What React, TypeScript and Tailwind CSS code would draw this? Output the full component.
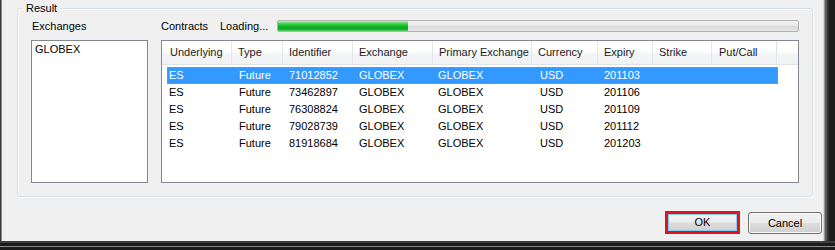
import React from "react";

type Col = { name: string; head: string; cell: string };

const cols: Col[] = [
  { name: "Underlying", head: "w-[70px] pl-[8px]", cell: "w-[65px] pl-[2px]" },
  { name: "Type", head: "w-[51px] pl-[6px]", cell: "w-[51px] pl-[7px]" },
  { name: "Identifier", head: "w-[70px] pl-[6px]", cell: "w-[70px] pl-[6px]" },
  { name: "Exchange", head: "w-[80px] pl-[6px]", cell: "w-[80px] pl-[6px]" },
  { name: "Primary Exchange", head: "w-[99px] pl-[6px]", cell: "w-[99px] pl-[5px]" },
  { name: "Currency", head: "w-[66px] pl-[6px]", cell: "w-[66px] pl-[8px]" },
  { name: "Expiry", head: "w-[55px] pl-[6px]", cell: "w-[55px] pl-[6px]" },
  { name: "Strike", head: "w-[59px] pl-[6px]", cell: "w-[59px] pl-[6px]" },
  { name: "Put/Call", head: "w-[65px] pl-[7px]", cell: "w-[65px] pl-[6px]" },
];

const rows = [
  ["ES", "Future", "71012852", "GLOBEX", "GLOBEX", "USD", "201103", "", ""],
  ["ES", "Future", "73462897", "GLOBEX", "GLOBEX", "USD", "201106", "", ""],
  ["ES", "Future", "76308824", "GLOBEX", "GLOBEX", "USD", "201109", "", ""],
  ["ES", "Future", "79028739", "GLOBEX", "GLOBEX", "USD", "201112", "", ""],
  ["ES", "Future", "81918684", "GLOBEX", "GLOBEX", "USD", "201203", "", ""],
];

export default function App() {
  return (
    <div className="w-[835px] h-[250px] flex flex-col bg-[#1b1b1b] font-['Liberation_Sans',Arial,sans-serif] text-[11px] leading-[13px] text-black overflow-hidden">
      <div className="flex h-[241px]">
        {/* left window edge */}
        <div className="w-[1px] bg-[#3a3a3a]" />
        <div className="w-[1px] bg-[#8a8a8a]" />
        {/* client area */}
        <div className="w-[821px] bg-[#f0f0f0] flex flex-col">
          {/* Group box */}
          <div className="relative ml-[15px] mt-[8px] w-[796px] h-[189px] border border-[#d5dfe5] rounded-[3px] shadow-[inset_1px_1px_0_#ffffff,1px_1px_0_#ffffff]">
            <span className="absolute left-[5px] -top-[7px] px-[3px] bg-[#f0f0f0]">Result</span>
            <div className="flex pl-[13px] pt-[8px] gap-[13px]">
              {/* Exchanges column */}
              <div className="flex flex-col w-[117px]">
                <div className="h-[18px] flex items-center pl-[1px]">Exchanges</div>
                <div className="mt-[5px] h-[143px] border border-[#828790] bg-white pl-[3px] pt-[2px]">
                  GLOBEX
                </div>
              </div>
              {/* Contracts column */}
              <div className="flex flex-col w-[638px]">
                <div className="h-[18px] flex items-center">
                  <span className="w-[59px]">Contracts</span>
                  <span className="w-[57px]">Loading...</span>
                  <div className="w-[522px] h-[12px] border border-[#b2b2b2] rounded-[2px] bg-[linear-gradient(to_bottom,#f4f4f4_0%,#e8e8e8_45%,#dadada_55%,#e6e6e6_100%)] overflow-hidden">
                    <div className="w-[130px] h-full bg-[linear-gradient(to_bottom,#b4f0b4_0%,#37d03f_30%,#06b025_60%,#0fa628_80%,#5ccf60_100%)]" />
                  </div>
                </div>
                <div className="mt-[5px] h-[143px] border border-[#828790] bg-white flex flex-col overflow-hidden">
                  {/* header */}
                  <div className="flex h-[24px] border-b border-[#e2e3e5] bg-[linear-gradient(to_bottom,#ffffff_0%,#ffffff_45%,#f4f5f7_55%,#f1f2f4_100%)]">
                    {cols.map((c) => (
                      <div
                        key={c.name}
                        className={`${c.head} h-full flex items-center border-r border-[#e4e5e7] whitespace-nowrap overflow-hidden text-[#1a1a1a]`}
                      >
                        {c.name}
                      </div>
                    ))}
                    <div className="flex-1 border-l border-[#f7f7f7]" />
                  </div>
                  {/* rows */}
                  <div className="mt-[2px] flex flex-col">
                    {rows.map((r, i) => (
                      <div
                        key={i}
                        className={
                          i === 0
                            ? "ml-[5px] w-[611px] h-[17px] flex items-center bg-[#3399ff] text-white outline outline-1 outline-dotted outline-[#e0862f] -outline-offset-1"
                            : "ml-[5px] w-[611px] h-[17px] flex items-center"
                        }
                      >
                        {r.map((v, j) => (
                          <div key={j} className={`${cols[j].cell} whitespace-nowrap overflow-hidden`}>
                            {v}
                          </div>
                        ))}
                      </div>
                    ))}
                  </div>
                </div>
              </div>
            </div>
          </div>
          {/* Buttons */}
          <div className="mt-[14px] flex justify-end gap-[8px] pr-[1px]">
            <button className="w-[75px] h-[23px] border-[3px] border-[#e4121c] p-0 bg-white">
              <div className="w-full h-full border border-[#7fd0f5] flex items-center justify-center bg-[linear-gradient(to_bottom,#f3f3f3_0%,#ececec_48%,#dddddd_52%,#d2d2d2_100%)]">
                OK
              </div>
            </button>
            <button className="w-[74px] h-[22px] mt-[1px] rounded-[3px] border border-[#707070] shadow-[inset_0_0_0_1px_#fbfbfb] flex items-center justify-center bg-[linear-gradient(to_bottom,#f2f2f2_0%,#ebebeb_48%,#dddddd_52%,#cfcfcf_100%)]">
              Cancel
            </button>
          </div>
        </div>
        {/* right window edge */}
        <div className="w-[1px] bg-[#d8d8d8]" />
        <div className="w-[1px] bg-[#9a9a9a]" />
        <div className="w-[2px] bg-[#5a5a5a]" />
        <div className="w-[2px] bg-[#333333]" />
        <div className="flex-1 bg-[#1c1c1c]" />
      </div>
      {/* bottom window edge */}
      <div className="h-[2px] bg-[#3c3c3c]" />
      <div className="h-[3px] bg-[#1b1b1b]" />
      <div className="h-[1px] bg-[#8a8a8a]" />
      <div className="flex-1 bg-[#1b1b1b]" />
    </div>
  );
}
